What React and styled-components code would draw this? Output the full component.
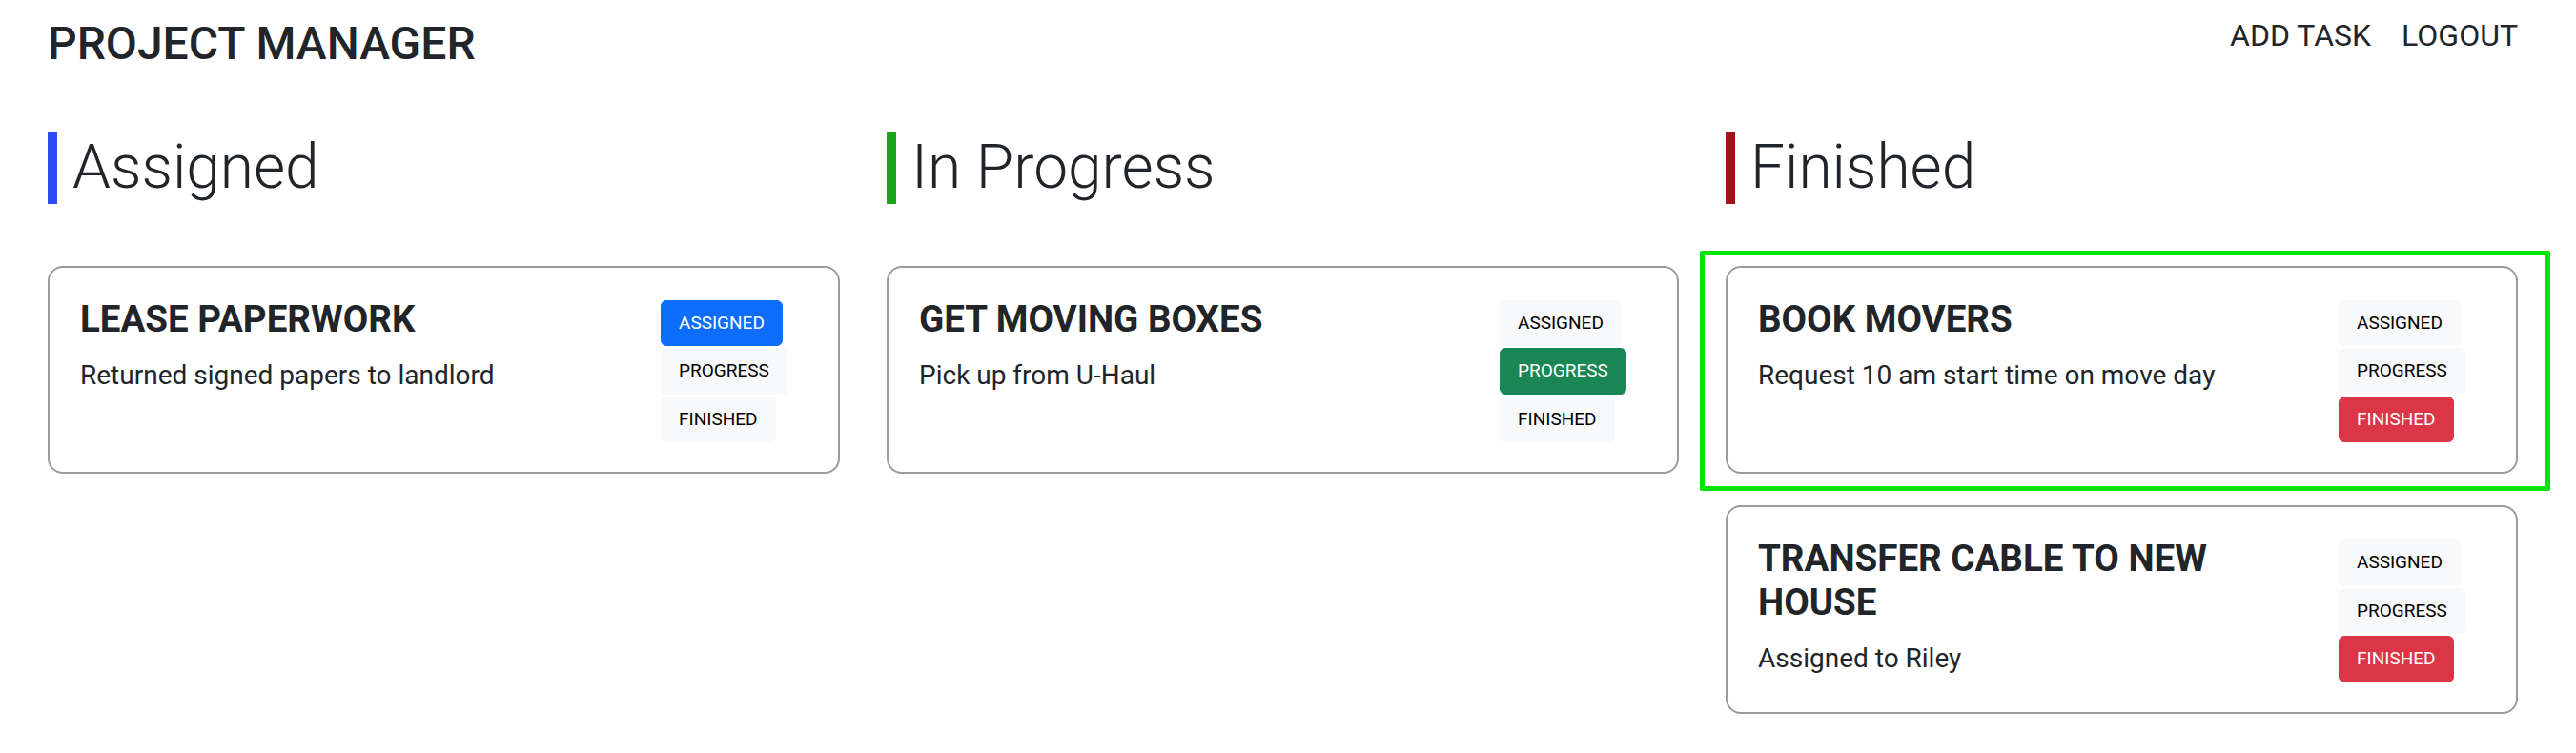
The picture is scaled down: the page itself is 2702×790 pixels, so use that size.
import React from "react";
import styled, { createGlobalStyle, css } from "styled-components";

const GlobalStyle = createGlobalStyle`
  * { box-sizing: border-box; }
  html, body { margin: 0; padding: 0; background: #ffffff; }
  body {
    font-family: Roboto, "Noto Sans", "Liberation Sans", sans-serif;
    color: #212529;
  }
`;

const Page = styled.div`
  padding: 0 61px 40px 50px;
`;

const Header = styled.header`
  display: flex;
  justify-content: space-between;
  align-items: flex-start;
  padding-top: 14px;
`;

const Brand = styled.h1`
  margin: 3px 0 0;
  font-size: 48px;
  font-weight: 500;
  line-height: 1.2;
  color: #212529;
`;

const Nav = styled.nav`
  display: flex;
  gap: 32px;
`;

const NavLink = styled.a`
  font-size: 32px;
  line-height: 46px;
  color: #212529;
  text-decoration: none;
  cursor: pointer;
`;

const Board = styled.main`
  display: grid;
  grid-template-columns: repeat(3, 1fr);
  column-gap: 49px;
  margin-top: 63px;
  align-items: start;
`;

const Column = styled.section`
  display: flex;
  flex-direction: column;
`;

const ColumnHeading = styled.h2`
  margin: 0 0 65px;
  border-left: 10px solid ${(p) => p.$accent};
  padding-left: 16px;
  font-size: 64px;
  font-weight: 300;
  line-height: 76px;
  color: #212529;
`;

const CardList = styled.div`
  display: flex;
  flex-direction: column;
  gap: 33px;
`;

const Card = styled.article`
  position: relative;
  display: flex;
  align-items: flex-start;
  border: 2px solid #9b9b9b;
  border-radius: 16px;
  padding: 31px 30px 31px 32px;
  background: #fff;

  ${(p) =>
    p.$highlighted &&
    css`
      &::after {
        content: "";
        position: absolute;
        top: -18px;
        left: -29px;
        right: -36px;
        bottom: -20px;
        border: 5px solid #00e600;
        border-radius: 2px;
        pointer-events: none;
      }
    `}
`;

const CardBody = styled.div`
  flex: 1;
  min-width: 0;
  padding-right: 24px;
`;

const CardTitle = styled.h3`
  margin: 0 0 15px;
  font-size: 38.5px;
  font-weight: 700;
  line-height: 1.2;
  color: #212529;
`;

const CardText = styled.p`
  margin: 0;
  font-size: 28px;
  line-height: 1.5;
  color: #212529;
`;

const Actions = styled.div`
  flex: 0 0 156px;
  display: flex;
  flex-direction: column;
  align-items: flex-start;
  gap: 2px;
  margin-top: 3px;
`;

const variants = {
  light: { bg: "#f8f9fa", fg: "#000000" },
  primary: { bg: "#0d6efd", fg: "#ffffff" },
  success: { bg: "#198754", fg: "#ffffff" },
  danger: { bg: "#dc3545", fg: "#ffffff" },
};

const StatusButton = styled.button`
  font-family: Roboto, "Noto Sans", "Liberation Sans", sans-serif;
  font-size: 19px;
  line-height: 1.5;
  font-weight: 400;
  padding: 9px 18px;
  border: 1px solid ${(p) => variants[p.$variant].bg};
  border-radius: 6px;
  background: ${(p) => variants[p.$variant].bg};
  color: ${(p) => variants[p.$variant].fg};
  text-transform: uppercase;
  cursor: pointer;
`;

const STATUSES = [
  { key: "assigned", label: "Assigned", active: "primary" },
  { key: "progress", label: "Progress", active: "success" },
  { key: "finished", label: "Finished", active: "danger" },
];

const columns = [
  {
    key: "assigned",
    title: "Assigned",
    accent: "#2a4df5",
    tasks: [
      {
        title: "LEASE PAPERWORK",
        text: "Returned signed papers to landlord",
      },
    ],
  },
  {
    key: "progress",
    title: "In Progress",
    accent: "#19a519",
    tasks: [{ title: "GET MOVING BOXES", text: "Pick up from U-Haul" }],
  },
  {
    key: "finished",
    title: "Finished",
    accent: "#a3111a",
    tasks: [
      {
        title: "BOOK MOVERS",
        text: "Request 10 am start time on move day",
        highlighted: true,
      },
      { title: "TRANSFER CABLE TO NEW HOUSE", text: "Assigned to Riley" },
    ],
  },
];

function TaskCard({ task, status }) {
  return (
    <Card $highlighted={task.highlighted}>
      <CardBody>
        <CardTitle>{task.title}</CardTitle>
        <CardText>{task.text}</CardText>
      </CardBody>
      <Actions>
        {STATUSES.map((s) => (
          <StatusButton
            key={s.key}
            $variant={s.key === status ? s.active : "light"}
          >
            {s.label}
          </StatusButton>
        ))}
      </Actions>
    </Card>
  );
}

export default function App() {
  return (
    <>
      <GlobalStyle />
      <Page>
        <Header>
          <Brand>PROJECT MANAGER</Brand>
          <Nav>
            <NavLink>ADD TASK</NavLink>
            <NavLink>LOGOUT</NavLink>
          </Nav>
        </Header>
        <Board>
          {columns.map((col) => (
            <Column key={col.key}>
              <ColumnHeading $accent={col.accent}>{col.title}</ColumnHeading>
              <CardList>
                {col.tasks.map((t) => (
                  <TaskCard key={t.title} task={t} status={col.key} />
                ))}
              </CardList>
            </Column>
          ))}
        </Board>
      </Page>
    </>
  );
}
